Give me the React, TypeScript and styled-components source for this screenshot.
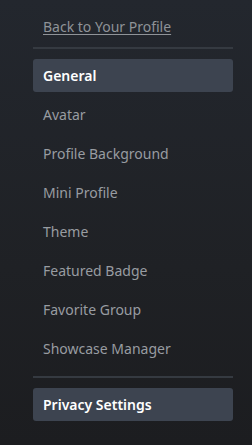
import React from "react";
import styled, { createGlobalStyle } from "styled-components";

const Global = createGlobalStyle`
  html, body { margin: 0; padding: 0; height: 100%; }
  body {
    background: linear-gradient(180deg, #23272e 0%, #1f2125 60%, #1c1d20 100%);
    font-family: "Noto Sans", "Open Sans", Arial, sans-serif;
  }
  #root { min-height: 445px; }
`;

const Nav = styled.nav`
  width: 200px;
  margin-left: 33px;
  padding-top: 16px;
  display: flex;
  flex-direction: column;
`;

const BackLink = styled.a`
  display: block;
  padding: 0 10px;
  height: 21px;
  line-height: 21px;
  font-size: 14px;
  color: #8f9398;
  text-decoration: underline;
  text-underline-offset: 2px;
`;

const Divider = styled.div<{ $top: number }>`
  height: 2px;
  background: #353a41;
  margin: ${(p) => p.$top}px 0 10px;
`;

const Item = styled.a<{ $active?: boolean }>`
  display: flex;
  align-items: center;
  height: 33px;
  padding: 0 10px;
  margin-bottom: 6px;
  border-radius: 3px;
  font-size: 14px;
  background: ${(p) => (p.$active ? "#3d4450" : "transparent")};
  color: ${(p) => (p.$active ? "#ffffff" : "#989ca1")};
  font-weight: ${(p) => (p.$active ? 600 : 400)};
`;

const items = [
  "General",
  "Avatar",
  "Profile Background",
  "Mini Profile",
  "Theme",
  "Featured Badge",
  "Favorite Group",
  "Showcase Manager",
];

export default function App() {
  return (
    <>
      <Global />
      <Nav>
        <BackLink>Back to Your Profile</BackLink>
        <Divider $top={10} />
        {items.map((t, i) => (
          <Item key={t} $active={i === 0}>
            {t}
          </Item>
        ))}
        <Divider $top={5} />
        <Item $active>Privacy Settings</Item>
      </Nav>
    </>
  );
}
